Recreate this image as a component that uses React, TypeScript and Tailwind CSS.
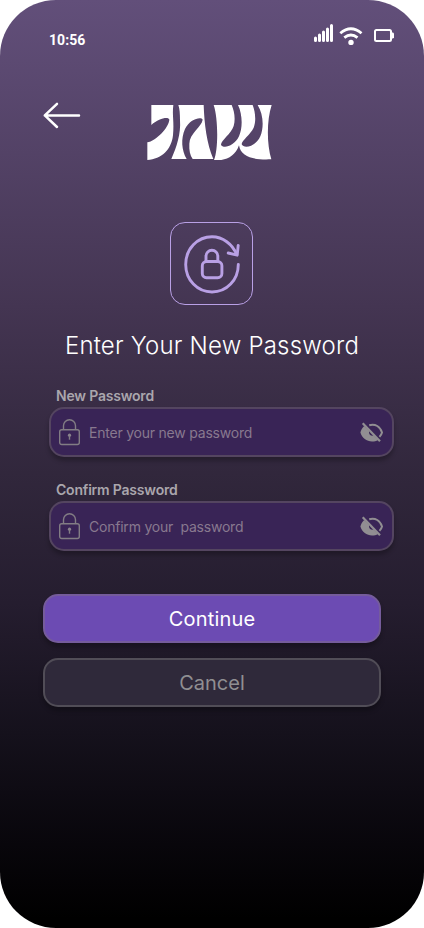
import React from "react";

function StatusBar() {
  return (
    <div className="flex h-[48px] items-start pl-[49px] pt-[23px] text-white">
      <span className="mt-[8px] w-[264px] font-['Roboto',sans-serif] text-[14px] font-bold leading-[18px] tracking-[0.05px]">
        10:56
      </span>
      <svg width="84" height="26" viewBox="313 23 84 26" fill="none" stroke="currentColor">
        <path d="M315.5 38v2.5M319.5 35v5.5M323.5 32v8.5M327.5 29v11.5M331.5 25.5v15" strokeWidth="3" strokeLinecap="round" />
        <path d="M340.3 33.2q10.6-9 21.2 0M344.3 37.7q6.6-5.4 13.2 0" strokeWidth="2.8" />
        <circle cx="351" cy="42.4" r="2.7" fill="currentColor" stroke="none" />
        <rect x="375" y="30" width="16" height="11" rx="1.5" strokeWidth="2" />
        <path d="M391.7 32.2q2.3.3 2.3 1.6v3.4q0 1.3-2.3 1.6z" fill="currentColor" stroke="none" />
      </svg>
    </div>
  );
}

function Header() {
  return (
    <header className="flex h-[112px] items-start pl-[43px] pt-[53px]">
      <button aria-label="Back" className="mr-[66px]">
        <svg width="38" height="28" viewBox="43 101 38 28" fill="none" stroke="white" strokeWidth="2.5" strokeLinecap="round" strokeLinejoin="round">
          <path d="M79 115.4H44.8M57 103.8L44.8 115.4L57 127" />
        </svg>
      </button>
      <svg className="mt-[3.7px]" width="125" height="55.33" viewBox="36 44 375 166" fill="white">
        <path d="M49 44H115C111 75 118 95 114 135C109 178 80 207 37 209V156C62 152 101 113 103 88C102 78 72 82 49 104Z" />
        <path d="M130 44H206C208 100 215 160 235 206H173C165 195 162 180 163 160C164 128 200 110 203 88C198 78 165 86 150 116C137 146 140 180 155 206H109C125 170 138 130 135 90C135 70 134 55 130 44Z" />
        <path d="M236 44H290C298 62 302 85 296 107C289 130 258 150 258 163C264 176 298 168 312 138C324 112 322 70 309 44H353C361 65 364 92 356 112C347 132 320 150 320 162C326 176 362 170 376 138C388 108 384 70 368 44H410C395 90 395 160 409 207C360 209 318 203 312 165C300 200 270 213 237 209C250 180 250 85 236 44Z" />
      </svg>
    </header>
  );
}

function ResetBadge() {
  return (
    <div className="ml-[170px] mt-[62px] h-[83px] w-[83px] rounded-[15px] border border-[#b9a0e5]">
      <svg width="81" height="81" viewBox="171 223 81 81" fill="none" stroke="#b9a0e5" strokeWidth="2.9" strokeLinecap="round" strokeLinejoin="round">
        <path d="M238.3 264.4C238.3 280 226.6 292 212 292S185.7 280 185.7 264.5S197.4 236.8 212 236.8C222.6 236.8 232.5 244 236.7 254.6" />
        <path d="M228.2 253L237.2 255.2L238.2 245.4" />
        <rect x="202.3" y="261.5" width="19.6" height="16.2" rx="4.2" />
        <path d="M206 261V256.2a5.9 5.9 0 0 1 11.8 0V261" />
      </svg>
    </div>
  );
}

function LockIcon() {
  return (
    <svg width="21" height="27" viewBox="0 0 21 27" fill="none" stroke="#827d84" strokeWidth="1.4">
      <rect x=".7" y="10.7" width="19.6" height="14.8" rx="2" />
      <path d="M4.5 10.5V6.7a6 6 0 0 1 12 0v3.8" />
      <circle cx="10.5" cy="16.2" r="1.6" fill="#8b858d" stroke="none" />
      <path d="M10.5 16.5v4.2" strokeWidth="1.4" />
    </svg>
  );
}

function HiddenIcon() {
  return (
    <svg className="relative -left-[0.5px] top-[0.5px]" width="24" height="23" viewBox="0 0 24 23" fill="none">
      <path d="M4.2 5C2.2 6.8 1 9.2.4 11.5C2 16.8 6.6 20.5 12 20.5c2.3 0 4.3-.5 6-1.5L13.2 14.6C10.8 15 8.8 13.4 9 11L9 9.6Z" fill="#918e92" />
      <path d="M9.2 4.2C15.3 2.4 20.3 5.7 22 11.5c-.5 1.8-1.3 3.2-2.5 4.4" stroke="#918e92" strokeWidth="2" />
      <path d="M2.7 2.2L20 20.2" stroke="#918e92" strokeWidth="2.2" />
    </svg>
  );
}

function PasswordField({ label, hint }: { label: string; hint: string }) {
  return (
    <label className="block h-[94px]">
      <span className="ml-[7px] block h-[20px] text-[14px] font-semibold leading-[18px] tracking-[-0.2px] text-[#aaa6ad]">{label}</span>
      <span className="flex h-[50px] w-[345px] items-center rounded-[15px] border-2 border-[#544560] bg-[#392456] pl-[8px] pr-[8px] shadow-[0_4px_4px_rgba(0,0,0,0.25)]">
        <LockIcon />
        <span className="ml-[9px] flex-1 whitespace-pre pt-[2px] text-[14px] leading-[20px] tracking-[-0.22px] text-[#88798f]">{hint}</span>
        <HiddenIcon />
      </span>
    </label>
  );
}

export default function App() {
  return (
    <div className="bg-white">
      <main className="h-[928px] w-[424px] overflow-hidden rounded-[56px] bg-[linear-gradient(180deg,#624f7a_0%,#443552_33%,#31273c_51%,#251d2f_65%,#15111c_79%,#08060b_91%,#000000_99%)] font-['Inter',sans-serif]">
        <StatusBar />
        <Header />
        <ResetBadge />
        <h1 className="mt-[25px] text-center text-[24px] font-light leading-[32px] tracking-[0.2px] text-white">Enter Your New Password</h1>
        <form className="ml-[49px] mt-[25px]">
          <PasswordField label="New Password" hint="Enter your new password" />
          <PasswordField label="Confirm Password" hint="Confirm your  password" />
        </form>
        <div className="ml-[43px] mt-[19px] flex w-[338px] flex-col gap-[15px] text-[20px]">
          <button className="h-[49px] rounded-[15px] border-2 border-[#755c9b] bg-[#6c4bb3] tracking-[0.2px] text-white shadow-[0_4px_4px_rgba(0,0,0,0.25)]">Continue</button>
          <button className="h-[49px] rounded-[15px] border-2 border-[#514d57] bg-[#2f293a] text-[#908f92] shadow-[0_4px_4px_rgba(0,0,0,0.25)]">Cancel</button>
        </div>
      </main>
    </div>
  );
}
